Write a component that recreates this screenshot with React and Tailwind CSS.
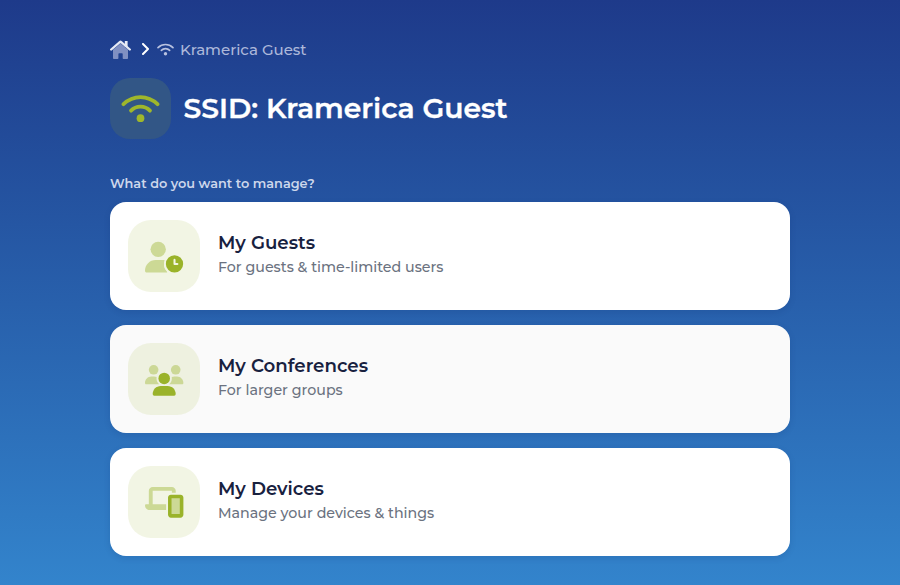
import React from "react";

function HomeIcon() {
  return (
    <svg className="h-[19px] w-[21px] shrink-0" viewBox="0 0 21 19" fill="none">
      <path d="M3 9.800L10.5 3.400L18 9.800V18.2Q18 19 17.2 19H13.4Q12.7 19 12.7 18.2V14Q12.7 13.2 12 13.2H9.2Q8.4 13.2 8.4 14V18.2Q8.4 19 7.6 19H3.8Q3 19 3 18.2Z" fill="#8090c2" />
      <path d="M14.8 1H17.6V7H14.8Z" fill="#e9ecf6" />
      <path d="M1.2 9.5L9.8 2.1Q10.5 1.500 11.2 2.1L19.8 9.5" stroke="#e6eaf5" strokeWidth="2.300" strokeLinecap="round" strokeLinejoin="round" />
    </svg>
  );
}

function WifiIcon({ className }) {
  return (
    <svg className={className} viewBox="0 0 40 30" fill="none">
      <path d="M2.4 10.5Q10 3.2 20 3.2T37.6 10.5" stroke="currentColor" strokeWidth="3.9" strokeLinecap="round" />
      <path d="M10.2 17.2Q14.2 13 20 13T29.8 17.2" stroke="currentColor" strokeWidth="3.9" strokeLinecap="round" />
      <circle cx="20" cy="25" r="4" fill="currentColor" />
    </svg>
  );
}

function GuestIcon() {
  return (
    <svg className="mt-px h-[30.72px] w-[38.4px] overflow-visible" viewBox="0 0 640 512" fill="#9ab32a">
      <g opacity=".42">
        <circle cx="220" cy="122" r="128" />
        <path d="M178 298H332A176 176 0 0 0 368 492V508H30C13 508 0 495 0 478C0 379.700 79.700 298 178 298Z" />
      </g>
      <circle cx="492" cy="366" r="176" fill="#f2f5e4" />
      <circle cx="492" cy="366" r="144" />
      <path d="M492 298V366H540" fill="none" stroke="#f2f5e4" strokeWidth="34" strokeLinecap="round" strokeLinejoin="round" />
    </svg>
  );
}

function ConferenceIcon() {
  return (
    <svg className="mt-px h-[30.72px] w-[38.4px] overflow-visible" viewBox="0 0 640 512" fill="#9ab32a">
      <g opacity=".4">
        <circle cx="144" cy="80" r="80" />
        <circle cx="512" cy="80" r="80" />
        <path d="M0 298.700C0 239.800 47.800 192 106.700 192h42.700c15.900 0 31 3.500 44.600 9.700c-1.300 7.200-1.900 14.700-1.900 22.300c0 38.200 16.800 72.500 43.300 96H21.300C9.600 320 0 310.400 0 298.700z" />
        <path d="M405.300 320h-.7c26.600-23.500 43.300-57.800 43.300-96c0-7.600-.7-15-1.900-22.300c13.600-6.300 28.700-9.700 44.600-9.700h42.700C592.200 192 640 239.800 640 298.700c0 11.800-9.600 21.300-21.300 21.300z" />
      </g>
      <circle cx="320" cy="224" r="96" />
      <path d="M128 485.300C128 411.700 187.700 352 261.300 352H378.700C452.300 352 512 411.700 512 485.300c0 14.700-11.900 26.700-26.700 26.700H154.700c-14.700 0-26.700-11.900-26.700-26.700z" />
    </svg>
  );
}

function DevicesIcon() {
  return (
    <svg className="h-[30.72px] w-[38.4px] overflow-visible" viewBox="0 0 640 512" fill="#9ab32a">
      <g opacity=".42">
        <path d="M64 288V64C64 28.700 92.700 0 128 0H448C483.300 0 512 28.700 512 64V96H448V64H128V288H352V384H77C34 384 0 350 0 307C0 297 9 288 19 288Z" />
        <path d="M440 184H584V456H440Z" />
      </g>
      <path fillRule="evenodd" d="M432 128H592C618.500 128 640 149.500 640 176V464C640 490.500 618.500 512 592 512H432C405.500 512 384 490.500 384 464V176C384 149.500 405.500 128 432 128ZM444 188V452H580V188Z" />
    </svg>
  );
}

function Card({ icon, title, text, hovered }) {
  return (
    <button
      className={
        "flex h-[108.2px] w-full items-center rounded-[16px] px-[18px] text-left shadow-[0_2px_6px_rgba(15,40,100,0.15)] " +
        (hovered ? "bg-[#fafafa]" : "bg-white")
      }
    >
      <span className={"flex size-[72px] shrink-0 items-center justify-center rounded-[23px] " + (hovered ? "bg-[#eef1e0]" : "bg-[#f2f5e4]")}>
        {icon}
      </span>
      <span className="ml-[18px] flex flex-col whitespace-nowrap pb-[5px]">
        <span className="text-[18.2px] font-semibold leading-[26px] text-[#18213f]">{title}</span>
        <span className="text-[14.23px] font-medium leading-[22px] text-[#6b7280]">{text}</span>
      </span>
    </button>
  );
}

export default function App() {
  return (
    <main className="h-[585px] w-[900px] overflow-hidden bg-linear-to-b from-[#1e3a8a] to-[#3384cc] px-[110px] pt-[39px] font-['Montserrat','Inter',sans-serif]">
      <nav className="flex h-[21px] items-center whitespace-nowrap">
        <HomeIcon />
        <svg className="mb-px ml-[10px] h-[12px] w-[9px] shrink-0" viewBox="0 0 9 12" fill="none">
          <path d="M2 1L7 6L2 11" stroke="white" strokeWidth="2" strokeLinecap="round" strokeLinejoin="round" />
        </svg>
        <WifiIcon className="ml-[7px] h-[13px] w-[17px] shrink-0 text-[#b9c2e0]" />
        <span className="ml-[6px] text-[15px] font-medium leading-[20px] text-[#adb8da]">Kramerica Guest</span>
      </nav>
      <header className="mt-[18px] flex h-[61px] items-center">
        <span className="flex size-[61px] shrink-0 items-center justify-center rounded-[20px] bg-[#325686]">
          <WifiIcon className="h-[29px] w-[39px] text-[#9fb72b]" />
        </span>
        <h1 className="mb-[2px] ml-[12.500px] whitespace-nowrap text-[28.22px] font-semibold leading-[36px] text-white [-webkit-text-stroke:0.35px_white]">SSID: Kramerica Guest</h1>
      </header>
      <p className="mt-[35px] h-[20px] text-[12.85px] font-semibold leading-[20px] text-[#cdd7eb]">What do you want to manage?</p>
      <section className="mt-[8.300px] flex flex-col gap-[14.8px]">
        <Card icon={<GuestIcon />} title="My Guests" text="For guests & time-limited users" />
        <Card hovered icon={<ConferenceIcon />} title="My Conferences" text="For larger groups" />
        <Card icon={<DevicesIcon />} title="My Devices" text="Manage your devices & things" />
      </section>
    </main>
  );
}
